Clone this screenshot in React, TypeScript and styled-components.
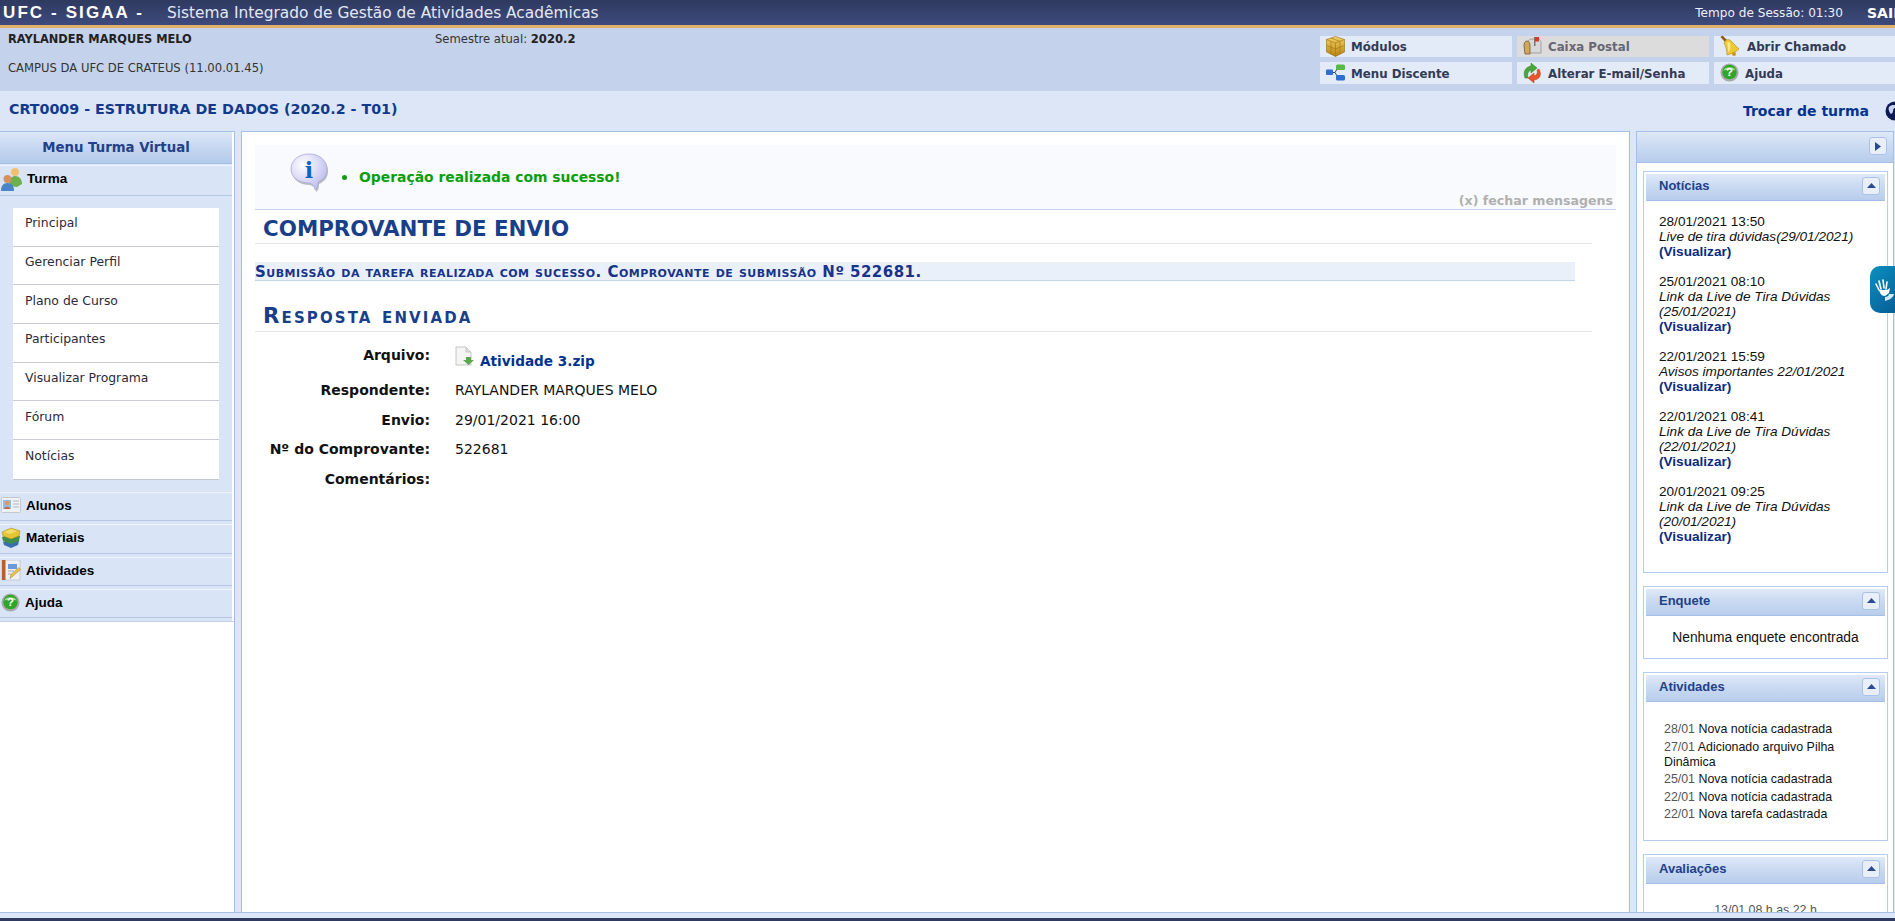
import React from "react";
import styled, { createGlobalStyle } from "styled-components";

const GlobalStyle = createGlobalStyle`
  html, body {
    margin: 0;
    padding: 0;
    overflow: hidden;
    background: #dde6f6;
    font-family: "DejaVu Sans", Verdana, sans-serif;
  }
`;

const Page = styled.div`
  width: 1895px;
  height: 921px;
  display: flex;
  flex-direction: column;
  overflow: hidden;
`;

const TopBar = styled.header`
  height: 25px;
  flex: none;
  display: flex;
  align-items: center;
  background: linear-gradient(#2f3a60, #3d4a7c);
  border-bottom: 3px solid #e0b06c;
  color: #fff;
  white-space: nowrap;
`;

const Brand = styled.span`
  margin-left: 3px;
  width: 164px;
  font: bold 17px "Liberation Sans", Arial, sans-serif;
  letter-spacing: 2.1px;
`;

const SystemName = styled.span`
  font-size: 15.4px;
  color: #e4e8f4;
`;

const SessionTime = styled.span`
  margin-left: auto;
  font-size: 12.1px;
  color: #eef0f8;
`;

const Exit = styled.span`
  margin-left: 24px;
  width: 28px;
  overflow: hidden;
  font-size: 14px;
  font-weight: bold;
`;

const InfoBar = styled.section`
  height: 63px;
  flex: none;
  display: flex;
  background: #c4d2eb;
`;

const UserBlock = styled.div`
  width: 435px;
  padding: 4px 0 0 8px;
  box-sizing: border-box;
  font-size: 11.4px;
  color: #222;
`;

const UserName = styled.div`
  font-weight: bold;
  line-height: 14px;
  margin-bottom: 15px;
`;

const Campus = styled.div`
  font-size: 11.6px;
  line-height: 14px;
  color: #333;
`;

const Semester = styled.div`
  padding-top: 4px;
  font-size: 11.6px;
  line-height: 14px;
  color: #333;
  b {
    color: #222;
  }
`;

const ShortcutGrid = styled.nav`
  margin-left: auto;
  margin-right: -11px;
  padding-top: 8px;
  display: grid;
  grid-template-columns: repeat(3, 192px);
  grid-template-rows: 21px 22px;
  column-gap: 5px;
  row-gap: 5px;
`;

const Shortcut = styled.a<{ $disabled?: boolean }>`
  display: flex;
  align-items: center;
  gap: 6px;
  padding-left: 6px;
  background: ${(p) => (p.$disabled ? "#dcdcdc" : "#e3eaf8")};
  color: ${(p) => (p.$disabled ? "#667" : "#333a55")};
  font-size: 11.8px;
  font-weight: bold;
  line-height: 17px;
  svg {
    flex: none;
    margin-top: -1px;
  }
`;

const ShortcutLabel = styled.span`
  padding-top: 2px;
`;

const CourseBar = styled.section`
  height: 40px;
  flex: none;
  display: flex;
  align-items: center;
  justify-content: space-between;
  padding-left: 9px;
  background: #dde6f6;
`;

const CourseTitle = styled.h1`
  margin: 0 0 4px;
  font-size: 14.25px;
  font-weight: bold;
  color: #123a8c;
`;

const SwitchClass = styled.a`
  display: flex;
  align-items: center;
  gap: 16px;
  margin-right: -10px;
  font-size: 14px;
  font-weight: bold;
  color: #003390;
`;

const Body = styled.main`
  flex: 1;
  min-height: 0;
  display: flex;
  gap: 6px;
  border-bottom: 1px solid #a4c0e8;
`;

const LeftPanel = styled.aside`
  width: 235px;
  flex: none;
  background: #fff;
  border: 1px solid #a4c0e8;
  border-width: 1px 1px 0 0;
  box-sizing: border-box;
`;

const MenuBlock = styled.div`
  background: #d9e5f7;
  padding-bottom: 3px;
  border-right: 2px solid #fff;
  box-shadow: 0 1px 0 #c3d2e8;
`;

const MenuTitle = styled.div`
  height: 31px;
  box-sizing: content-box;
  display: flex;
  align-items: center;
  justify-content: center;
  padding-top: 0;
  background: linear-gradient(#dde8f8, #c6d7f0 50%, #b4caeb);
  border-bottom: 1px solid #a4c0e8;
  font-size: 13.3px;
  line-height: 18px;
  font-weight: bold;
  color: #23408a;
`;

const MenuHead = styled.div<{ $height: number; $first?: boolean }>`
  height: ${(p) => p.$height}px;
  margin-top: ${(p) => (p.$first ? 1 : 3)}px;
  box-sizing: border-box;
  display: flex;
  align-items: center;
  gap: 5px;
  padding: 0 0 ${(p) => (p.$first ? 4 : 2)}px 1px;
  border-top: 1px solid #eef3fc;
  border-bottom: 1px solid #b7c8e2;
  font: bold 13.5px "Liberation Sans", Arial, sans-serif;
  color: #000;
`;

const MenuList = styled.ul`
  list-style: none;
  margin: 12px 13px 12px 13px;
  padding: 0;
  background: #fff;
  border-bottom: 1px solid #c4c8cf;
`;

const MenuItem = styled.li`
  height: 38.7px;
  box-sizing: border-box;
  display: flex;
  align-items: center;
  padding: 0 0 8px 12px;
  font-size: 12.4px;
  color: #2a2a3a;
  border-bottom: 1px solid #c8ccd2;
  &:last-child {
    border-bottom: none;
  }
`;

const MainPanel = styled.div`
  flex: 1;
  min-width: 0;
  background: #fff;
  border: 1px solid #a4c0e8;
  border-width: 1px 1px 0 1px;
  padding: 13px 13px 0 13px;
`;

const Message = styled.div`
  height: 65px;
  box-sizing: border-box;
  background: #f9fafd;
  border-bottom: 1px solid #c4d4ee;
  display: flex;
  flex-direction: column;
`;

const MessageRow = styled.div`
  display: flex;
  align-items: flex-end;
  padding: 8px 0 0 35px;
`;

const MessageText = styled.span`
  margin-left: 12px;
  padding-bottom: 8px;
  font-size: 13.9px;
  font-weight: bold;
  color: #0a9f0a;
  &::before {
    content: "";
    display: inline-block;
    width: 5px;
    height: 5px;
    border-radius: 50%;
    background: #0a9f0a;
    margin-right: 12px;
    vertical-align: 2px;
  }
`;

const CloseMessages = styled.a`
  align-self: flex-end;
  margin-top: 0;
  margin-right: 3px;
  font-size: 12.6px;
  font-weight: bold;
  color: #b0b0b0;
`;

const PageTitle = styled.h2`
  margin: 0 24px 0 0;
  height: 33px;
  line-height: 37px;
  padding-left: 8px;
  border-bottom: 1px solid #e2e4e8;
  font-size: 21.4px;
  font-weight: bold;
  color: #1a3f8a;
`;

const Notice = styled.div`
  margin: 18px 41px 0 0;
  height: 18px;
  line-height: 20px;
  background: #eaf0fa;
  border-bottom: 1px solid #c4d4ee;
  font-size: 15px;
  letter-spacing: 0.47px;
  font-weight: bold;
  font-variant: small-caps;
  color: #17338a;
  white-space: nowrap;
`;

const SectionTitle = styled.h3`
  margin: 19px 24px 0 0;
  height: 32px;
  line-height: 32px;
  padding-left: 8px;
  box-sizing: border-box;
  border-bottom: 1px solid #e2e4e8;
  font-size: 21.4px;
  letter-spacing: 2.1px;
  font-weight: bold;
  font-variant: small-caps;
  color: #1a3f8a;
`;

const DetailGrid = styled.dl`
  margin: 11px 0 0 0;
  display: grid;
  grid-template-columns: 175px 1fr;
  column-gap: 25px;
  font-size: 14px;
  color: #111;
`;

const Label = styled.dt<{ $height: number }>`
  height: ${(p) => p.$height}px;
  line-height: 24px;
  text-align: right;
  font-weight: bold;
`;

const Value = styled.dd`
  margin: 0;
  line-height: 24px;
`;

const FileLink = styled.a`
  display: flex;
  align-items: flex-end;
  gap: 6px;
  height: 28px;
  font-size: 13.6px;
  font-weight: bold;
  color: #003390;
  line-height: 20px;
  svg {
    margin-bottom: 5px;
  }
`;

const RightPanel = styled.aside`
  width: 258px;
  flex: none;
  margin-right: 1px;
  overflow: hidden;
  background: #fff;
  border: 1px solid #a4c0e8;
  border-width: 1px 1px 0 1px;
  box-sizing: border-box;
`;

const RightHead = styled.div`
  height: 31px;
  display: flex;
  justify-content: flex-end;
  padding: 5px 6px 0 0;
  box-sizing: border-box;
  background: linear-gradient(#dfe9f8, #c9d9f1 50%, #b8cdec);
  border-bottom: 1px solid #a4c0e8;
`;

const ToggleButton = styled.span`
  width: 18px;
  height: 18px;
  box-sizing: border-box;
  display: flex;
  align-items: center;
  justify-content: center;
  background: #e8effb;
  border: 1px solid #a9c2e6;
  border-radius: 3px;
`;

const Box = styled.section<{ $height: number }>`
  margin: 0 5px 13px 6px;
  height: ${(p) => p.$height}px;
  box-sizing: border-box;
  border: 1px solid #b5cdf0;
  padding: 2px 2px 0;
  font-family: "Liberation Sans", Arial, sans-serif;
  overflow: hidden;
  &:first-of-type {
    margin-top: 8px;
  }
`;

const BoxHead = styled.div`
  height: 27px;
  box-sizing: border-box;
  display: flex;
  align-items: center;
  justify-content: space-between;
  padding: 0 5px 3px 13px;
  background: linear-gradient(#dfe9f8, #c9d9f1 50%, #b8cdec);
  border-bottom: 1px solid #a4c0e8;
  font-size: 13px;
  font-weight: bold;
  color: #23408a;
`;

const NewsList = styled.div`
  padding: 13px 10px 0 13px;
  font-size: 13.6px;
  line-height: 15px;
  color: #111;
`;

const NewsItem = styled.div`
  margin-bottom: 15px;
  i {
    display: block;
  }
  a {
    display: block;
    font-weight: bold;
    color: #0b2a80;
  }
`;

const EmptyText = styled.div`
  margin-top: 14px;
  text-align: center;
  font-size: 13.8px;
  color: #111;
`;

const ActivityList = styled.div`
  padding: 20px 10px 0 18px;
  font-size: 12.4px;
  line-height: 15px;
  color: #111;
`;

const ActivityRow = styled.div`
  margin-bottom: 2.5px;
  span {
    color: #555;
  }
`;

const ExamLine = styled.div`
  margin-top: 19px;
  text-align: center;
  font-size: 12.4px;
  color: #555;
`;

const BottomStrip = styled.footer`
  height: 8px;
  flex: none;
  box-sizing: border-box;
  background: #dde6f6;
  border-bottom: 3px solid #2f3a60;
`;

const AccessWidget = styled.div`
  position: absolute;
  left: 1870px;
  top: 266px;
  width: 25px;
  height: 47px;
  display: flex;
  align-items: center;
  justify-content: flex-end;
  background: linear-gradient(135deg, #0b8fc0, #075f96);
  border-radius: 10px 0 0 10px;
`;

function CubeIcon() {
  return (
    <svg width="19" height="21" viewBox="0 0 19 21">
      <defs>
        <linearGradient id="cubeFill" x1="0" y1="0" x2="0" y2="1">
          <stop offset="0" stopColor="#f4d468" />
          <stop offset="1" stopColor="#b9800f" />
        </linearGradient>
      </defs>
      <path d="M9.500 .5 18.500 3.500v12.500l-9 4.500-9-4.500V3.500z" fill="url(#cubeFill)" stroke="#96700f" strokeWidth=".6" />
      <path d="M.5 3.500l9 3.500 9-3.500M9.500 7v13.500M.5 9.500l9 3.500 9-3.500M5 2l9 3.500M5 5.500V18M14 5.500V18" stroke="#a67a12" strokeWidth=".7" fill="none" />
    </svg>
  );
}

function MailboxIcon() {
  return (
    <svg width="19" height="21" viewBox="0 0 19 21">
      <path d="M5 6c0-2 2-3 4-3h6c2 0 3 2 3 4v10H6z" fill="#d8d8d8" stroke="#8a8a8a" strokeWidth=".7" />
      <path d="M1 10c0-3 1-5 3-5s3 2 3 5v8H2z" fill="#d0a860" stroke="#6a4a18" strokeWidth=".7" />
      <path d="M11 1h1.500v9H11z" fill="#777" />
      <path d="M12 1h4v4.500h-4z" fill="#d63a2a" />
    </svg>
  );
}

function BellIcon() {
  return (
    <svg width="21" height="22" viewBox="0 0 21 22">
      <path d="M.5 2 2.500 .5 7 5 5 7z" fill="#8a5a18" />
      <path d="M6 5c3-1 5 0 7 3l6 6c-3 3-8 5-12 6 0-4-1-9-3-12z" fill="#f0c92e" stroke="#b28a10" strokeWidth=".6" />
      <path d="M8 7c2 0 3 2 2 8l-2 2c0-3 0-7-1-9z" fill="#fbe88a" />
      <circle cx="14" cy="19" r="2" fill="#c99a14" />
    </svg>
  );
}

function FlowIcon() {
  return (
    <svg width="19" height="19" viewBox="0 0 19 19">
      <path d="M6 9.500h3L12 4.500M9 9.500l3 5" stroke="#3a4a66" strokeWidth="1" fill="none" />
      <rect x="0" y="6.500" width="7" height="5.500" rx="1" fill="#2c6fd0" />
      <rect x="10" y="1.500" width="9" height="5.500" rx="1.500" fill="#58b84a" />
      <rect x="10" y="12" width="9" height="5.500" rx="1.500" fill="#2c6fd0" />
    </svg>
  );
}

function RefreshIcon() {
  return (
    <svg width="19" height="22" viewBox="0 0 19 22">
      <path d="M2 16C-.5 9 3 5 8 4V1l6 5-6 5V8c-3 1-4 4-3 8z" fill="#4aa83a" stroke="#2a7a20" strokeWidth=".5" />
      <path d="M16 7c3 6 1 10-5 11v3l-6-5 6-5v3c3-1 4-3 3-6z" fill="#e8552a" stroke="#b03a14" strokeWidth=".5" />
    </svg>
  );
}

function HelpIcon({ size = 19 }: { size?: number }) {
  return (
    <svg width={size} height={size} viewBox="0 0 20 20">
      <circle cx="10" cy="10" r="9.500" fill="#a9a9a9" />
      <circle cx="10" cy="9.500" r="7.600" fill="#2fa52a" />
      <path d="M3.500 8a6.800 5 0 0 1 13 0 12 6 0 0 0-13 0" fill="#a7e08f" />
      <text x="10" y="14" textAnchor="middle" fontFamily="Liberation Sans" fontWeight="bold" fontSize="12" fill="#fff">?</text>
    </svg>
  );
}

function PeopleIcon() {
  return (
    <svg width="21" height="24" viewBox="0 0 21 24">
      <circle cx="14" cy="5" r="4" fill="#f0c070" />
      <path d="M8 19c0-6 2-10 6-10s7 3 7 8l-5 3z" fill="#6cb050" />
      <circle cx="6.500" cy="12" r="4" fill="#d89060" />
      <path d="M0 24c0-5 2-8 6.500-8S13 19 13 24z" fill="#4a85c8" />
    </svg>
  );
}

function CardIcon() {
  return (
    <svg width="20" height="16" viewBox="0 0 20 16">
      <rect x=".5" y=".5" width="19" height="15" rx="1" fill="#eef1f6" stroke="#c4c8ce" />
      <rect x="2" y="3" width="8" height="9" fill="#8fbdea" />
      <circle cx="6" cy="6" r="2.200" fill="#e09a60" />
      <path d="M3 12c0-3 6-3 6 0z" fill="#c46a40" />
      <path d="M12 4h6M12 7h6M12 10h6" stroke="#b0b8c4" />
    </svg>
  );
}

function BooksIcon() {
  return (
    <svg width="20" height="21" viewBox="0 0 20 21">
      <path d="M2 15l8-3 8 2-1 4-7 3-7-3z" fill="#3a6fb0" />
      <path d="M1 10l9-3 9 2-1 5-8 3-8-3z" fill="#3f8f4a" />
      <path d="M1 5l9-4 9 3-1 5-8 3-8-3z" fill="#e6c534" stroke="#a88a10" strokeWidth=".5" />
      <path d="M3 5l7-3 6 2-7 3z" fill="#f4dc6c" />
    </svg>
  );
}

function NotesIcon() {
  return (
    <svg width="20" height="21" viewBox="0 0 20 21">
      <rect x="1" y="0" width="18" height="20" fill="#eef0f4" stroke="#b0b4bc" strokeWidth=".6" />
      <rect x="1" y="0" width="3.500" height="20" fill="#b85f2c" />
      <rect x="7" y="4" width="9" height="5" fill="#6c9ad8" />
      <path d="M7 11h6M7 14h3" stroke="#a0a8b4" />
      <path d="M9 18.500l1-4 8-7 1.500 2-8 7z" fill="#ecc24a" stroke="#a8801c" strokeWidth=".5" />
    </svg>
  );
}

function InfoIcon() {
  return (
    <svg width="40" height="40" viewBox="0 0 40 40">
      <defs>
        <radialGradient id="infoFill" cx="35%" cy="30%" r="80%">
          <stop offset="0" stopColor="#ffffff" />
          <stop offset="1" stopColor="#b7b7ee" />
        </radialGradient>
      </defs>
      <path d="M20 3c10 0 18 6 18 15 0 7-4 11-9 13 0 3 0 6-3 8 0-4-3-6-6-7C9 32 2 26 2 18 2 9 10 3 20 3z" fill="#888" opacity=".55" />
      <path d="M19 1c10 0 18 6 18 15 0 7-4 11-9 13 0 3 0 6-3 8 0-4-3-6-6-7C8 30 1 24 1 16 1 7 9 1 19 1z" fill="url(#infoFill)" stroke="#a8a8d8" strokeWidth=".8" />
      <text x="19" y="25" textAnchor="middle" fontFamily="DejaVu Serif" fontWeight="bold" fontSize="22" fill="#0a64c8">i</text>
    </svg>
  );
}

function FileIcon() {
  return (
    <svg width="19" height="20" viewBox="0 0 19 20">
      <path d="M1 1h10l5 5v13H1z" fill="#f4f5f4" stroke="#c4c6c4" />
      <path d="M11 1v5h5" fill="#dcdedc" stroke="#c4c6c4" />
      <path d="M11 11h5v3h3l-5.500 5L8 14h3z" fill="#5aa84a" />
    </svg>
  );
}

function GlobeIcon() {
  return (
    <svg width="20" height="20" viewBox="0 0 20 20">
      <circle cx="10" cy="10" r="9.500" fill="#0d1a55" />
      <path d="M4 6c3-3 6-2 8-1-1 2-4 2-4 5 0 2-2 4-3 2S3 8 4 6zM12 11c2-1 4-1 5 0-1 3-3 5-5 5 0-2-1-3 0-5z" fill="#c8d4ee" />
    </svg>
  );
}

function HandIcon() {
  return (
    <svg width="21" height="24" viewBox="0 0 21 24">
      <path d="M2 6l3 6M5 3l2 8M9 2l1 8M13 4l-1 7" stroke="#fff" strokeWidth="1.600" fill="none" strokeLinecap="round" />
      <path d="M5 12h8l3-2-1 5-4 3c-3 0-5-2-6-6z" fill="#fff" />
      <path d="M11 23c4-1 8-3 9-7h-5c0 2-2 3-4 3z" fill="#cfeaf6" />
    </svg>
  );
}

function ArrowRight() {
  return (
    <svg width="6" height="9" viewBox="0 0 6 9">
      <path d="M0 0l6 4.500L0 9z" fill="#2b4a94" />
    </svg>
  );
}

function ArrowUp() {
  return (
    <svg width="9" height="5" viewBox="0 0 9 5">
      <path d="M0 5l4.500-5L9 5z" fill="#2b4a94" />
    </svg>
  );
}

const menuLinks = [
  "Principal",
  "Gerenciar Perfil",
  "Plano de Curso",
  "Participantes",
  "Visualizar Programa",
  "Fórum",
  "Notícias",
];

const news = [
  { date: "28/01/2021 13:50", title: "Live de tira dúvidas(29/01/2021)" },
  { date: "25/01/2021 08:10", title: "Link da Live de Tira Dúvidas (25/01/2021)" },
  { date: "22/01/2021 15:59", title: "Avisos importantes 22/01/2021" },
  { date: "22/01/2021 08:41", title: "Link da Live de Tira Dúvidas (22/01/2021)" },
  { date: "20/01/2021 09:25", title: "Link da Live de Tira Dúvidas (20/01/2021)" },
];

const activities = [
  { date: "28/01", text: "Nova notícia cadastrada" },
  { date: "27/01", text: "Adicionado arquivo Pilha Dinâmica" },
  { date: "25/01", text: "Nova notícia cadastrada" },
  { date: "22/01", text: "Nova notícia cadastrada" },
  { date: "22/01", text: "Nova tarefa cadastrada" },
];

const App: React.FC = () => {
  return (
    <Page>
      <GlobalStyle />
      <TopBar>
        <Brand>UFC - SIGAA -</Brand>
        <SystemName>Sistema Integrado de Gestão de Atividades Acadêmicas</SystemName>
        <SessionTime>Tempo de Sessão: 01:30</SessionTime>
        <Exit>SAIR</Exit>
      </TopBar>

      <InfoBar>
        <UserBlock>
          <UserName>RAYLANDER MARQUES MELO</UserName>
          <Campus>CAMPUS DA UFC DE CRATEUS (11.00.01.45)</Campus>
        </UserBlock>
        <Semester>
          Semestre atual: <b>2020.2</b>
        </Semester>
        <ShortcutGrid>
          <Shortcut><CubeIcon /><ShortcutLabel>Módulos</ShortcutLabel></Shortcut>
          <Shortcut $disabled><MailboxIcon /><ShortcutLabel>Caixa Postal</ShortcutLabel></Shortcut>
          <Shortcut><BellIcon /><ShortcutLabel>Abrir Chamado</ShortcutLabel></Shortcut>
          <Shortcut><FlowIcon /><ShortcutLabel>Menu Discente</ShortcutLabel></Shortcut>
          <Shortcut><RefreshIcon /><ShortcutLabel>Alterar E-mail/Senha</ShortcutLabel></Shortcut>
          <Shortcut><HelpIcon /><ShortcutLabel>Ajuda</ShortcutLabel></Shortcut>
        </ShortcutGrid>
      </InfoBar>

      <CourseBar>
        <CourseTitle>CRT0009 - ESTRUTURA DE DADOS (2020.2 - T01)</CourseTitle>
        <SwitchClass>Trocar de turma <GlobeIcon /></SwitchClass>
      </CourseBar>

      <Body>
        <LeftPanel>
          <MenuBlock>
            <MenuTitle>Menu Turma Virtual</MenuTitle>
            <MenuHead $height={31} $first><PeopleIcon />Turma</MenuHead>
            <MenuList>
              {menuLinks.map((link) => (
                <MenuItem key={link}>{link}</MenuItem>
              ))}
            </MenuList>
            <MenuHead $height={29}><CardIcon />Alunos</MenuHead>
            <MenuHead $height={30}><BooksIcon />Materiais</MenuHead>
            <MenuHead $height={29}><NotesIcon />Atividades</MenuHead>
            <MenuHead $height={29}><HelpIcon />Ajuda</MenuHead>
          </MenuBlock>
        </LeftPanel>

        <MainPanel>
          <Message>
            <MessageRow>
              <InfoIcon />
              <MessageText>Operação realizada com sucesso!</MessageText>
            </MessageRow>
            <CloseMessages>(x) fechar mensagens</CloseMessages>
          </Message>
          <PageTitle>COMPROVANTE DE ENVIO</PageTitle>
          <Notice>Submissão da tarefa realizada com sucesso. Comprovante de submissão Nº 522681.</Notice>
          <SectionTitle>Resposta enviada</SectionTitle>
          <DetailGrid>
            <Label $height={35}>Arquivo:</Label>
            <Value><FileLink><FileIcon />Atividade 3.zip</FileLink></Value>
            <Label $height={30}>Respondente:</Label>
            <Value>RAYLANDER MARQUES MELO</Value>
            <Label $height={29}>Envio:</Label>
            <Value>29/01/2021 16:00</Value>
            <Label $height={30}>Nº do Comprovante:</Label>
            <Value>522681</Value>
            <Label $height={30}>Comentários:</Label>
            <Value />
          </DetailGrid>
        </MainPanel>

        <RightPanel>
          <RightHead>
            <ToggleButton><ArrowRight /></ToggleButton>
          </RightHead>
          <Box $height={402}>
            <BoxHead>Notícias<ToggleButton><ArrowUp /></ToggleButton></BoxHead>
            <NewsList>
              {news.map((item) => (
                <NewsItem key={item.date}>
                  {item.date}
                  <i>{item.title}</i>
                  <a>(Visualizar)</a>
                </NewsItem>
              ))}
            </NewsList>
          </Box>
          <Box $height={73}>
            <BoxHead>Enquete<ToggleButton><ArrowUp /></ToggleButton></BoxHead>
            <EmptyText>Nenhuma enquete encontrada</EmptyText>
          </Box>
          <Box $height={169}>
            <BoxHead>Atividades<ToggleButton><ArrowUp /></ToggleButton></BoxHead>
            <ActivityList>
              {activities.map((a, i) => (
                <ActivityRow key={i}>
                  <span>{a.date}</span> {a.text}
                </ActivityRow>
              ))}
            </ActivityList>
          </Box>
          <Box $height={100}>
            <BoxHead>Avaliações<ToggleButton><ArrowUp /></ToggleButton></BoxHead>
            <ExamLine>13/01 08 h as 22 h</ExamLine>
          </Box>
        </RightPanel>
      </Body>
      <BottomStrip />
      <AccessWidget><HandIcon /></AccessWidget>
    </Page>
  );
};

export default App;
